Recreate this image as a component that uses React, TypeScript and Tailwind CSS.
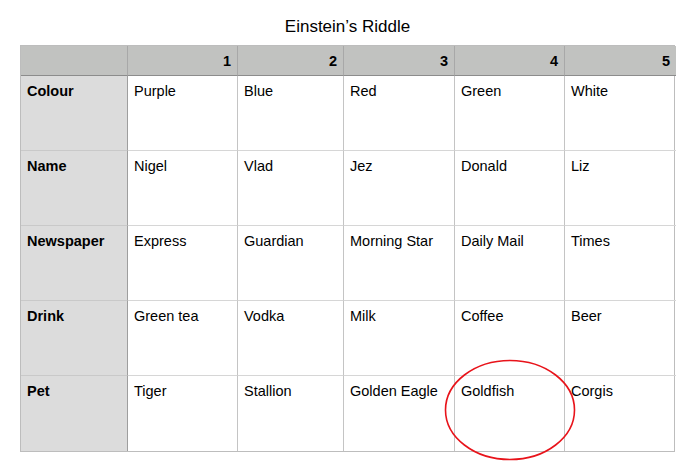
const COLS = ["1", "2", "3", "4", "5"];

const ROWS = [
  { label: "Colour", values: ["Purple", "Blue", "Red", "Green", "White"] },
  { label: "Name", values: ["Nigel", "Vlad", "Jez", "Donald", "Liz"] },
  { label: "Newspaper", values: ["Express", "Guardian", "Morning Star", "Daily Mail", "Times"] },
  { label: "Drink", values: ["Green tea", "Vodka", "Milk", "Coffee", "Beer"] },
  { label: "Pet", values: ["Tiger", "Stallion", "Golden Eagle", "Goldfish", "Corgis"] },
];

export default function App() {
  return (
    <div className="w-[700px] h-[469px] bg-white text-black font-['Liberation_Sans',Arial,sans-serif]">
      <div className="pt-[16px] w-[655px] ml-[20px]">
        <h1 className="text-center text-[17px] leading-[21px] h-[29px]">Einstein’s Riddle</h1>

        <div className="relative">
          <div className="grid grid-cols-[107px_110px_106px_111px_110px_111px] grid-rows-[30px_repeat(5,75px)] border border-[#bdbdbd] text-[14.5px] leading-[17px]">
            {/* header row */}
            <div className="bg-[#c1c2c0] border-b border-r border-b-[#8c8c8c] border-r-[#a8a8a8]" />
            {COLS.map((c, i) => (
              <div
                key={c}
                className={`bg-[#c1c2c0] border-b border-b-[#8c8c8c] font-bold text-right pr-[6px] pt-[7px] ${
                  i < COLS.length - 1 ? "border-r border-r-[#a8a8a8]" : ""
                }`}
              >
                {c}
              </div>
            ))}

            {ROWS.map((row, r) => (
              <div key={row.label} className="contents">
                <div
                  className={`bg-[#dcdcdc] border-r border-r-[#9e9e9e] font-bold pl-[6px] pt-[7px] ${
                    r < ROWS.length - 1 ? "border-b border-b-[#c9c9c9]" : ""
                  }`}
                >
                  {row.label}
                </div>
                {row.values.map((v, i) => (
                  <div
                    key={i}
                    className={`pl-[6px] pt-[7px] ${i < row.values.length - 1 ? "border-r border-r-[#c4c4c4]" : ""} ${
                      r < ROWS.length - 1 ? "border-b border-b-[#d6d6d6]" : ""
                    }`}
                  >
                    {v}
                  </div>
                ))}
              </div>
            ))}
          </div>

          {/* red circle around Goldfish */}
          <svg className="absolute left-[424px] top-[314px] pointer-events-none" width="132" height="102" viewBox="0 0 132 102">
            <ellipse cx="66" cy="51" rx="64.5" ry="49.5" fill="none" stroke="#e8131a" strokeWidth="1.6" />
          </svg>
        </div>
      </div>
    </div>
  );
}
